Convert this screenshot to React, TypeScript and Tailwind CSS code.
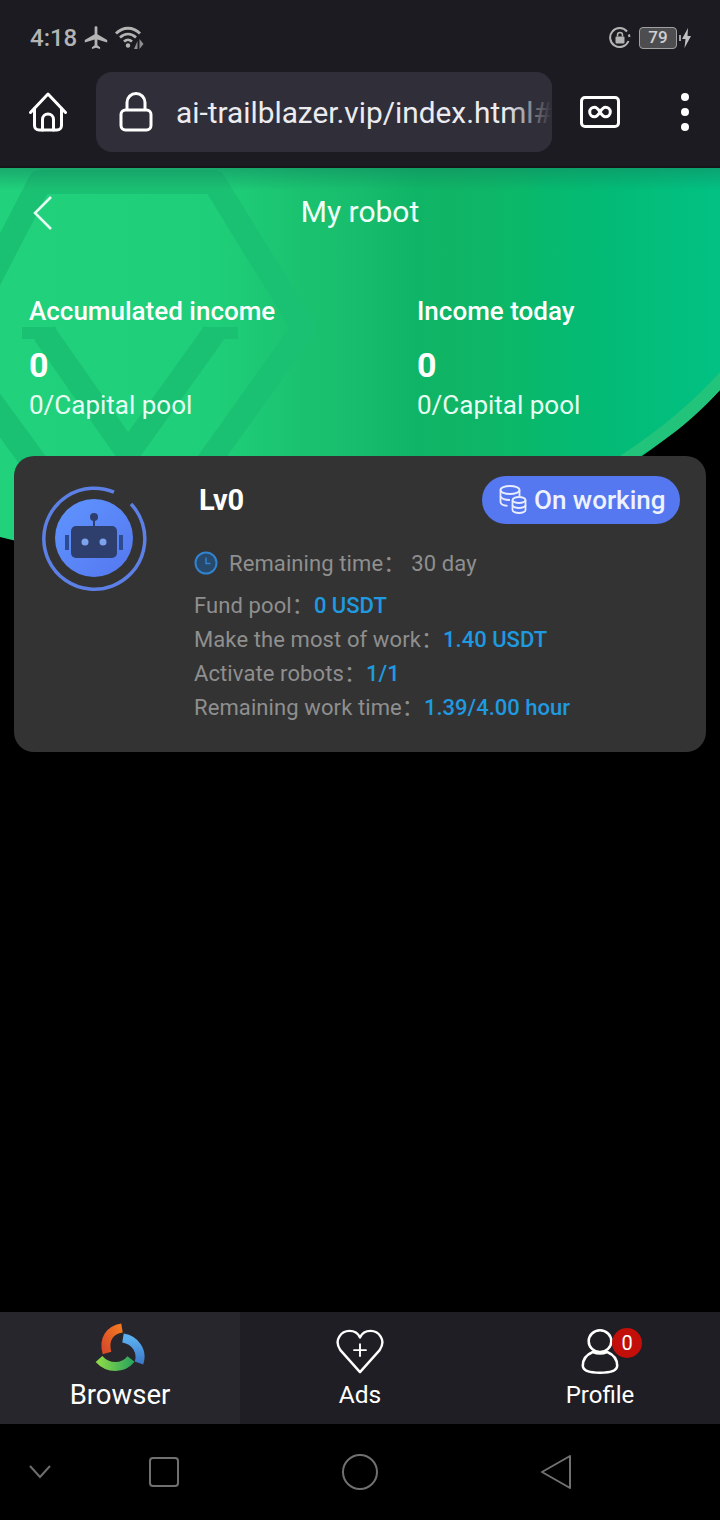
import React from "react";

const Plane = () => (
  <svg width="24" height="24" viewBox="0 0 24 24" fill="#b4b4b4">
    <path d="M10.600 1.500c0-.8.6-1.300 1.400-1.300s1.400.5 1.400 1.300v6.700l9.800 5.800v2.600l-9.800-3v5.600l2.700 2v1.900L12 21.800l-4.100 1.300v-1.900l2.700-2v-5.600l-9.800 3v-2.600l9.800-5.800z" />
  </svg>
);

const Wifi = () => (
  <svg width="30" height="24" viewBox="0 0 30 24" fill="none" stroke="#b4b4b4" strokeWidth="2.800">
    <path d="M1 7.500C8 .5 18 .5 25 7.500" />
    <path d="M5 11.500c5-4.500 11-4.500 16 0" />
    <path d="M9 15.500c3-2.500 5-2.500 8 0" />
    <circle cx="13" cy="19.500" r="2.200" fill="#b4b4b4" stroke="none" />
    <path d="M19 23l3.500-8v8zM24.500 13l4 5-4 5z" fill="#8f8f8f" stroke="none" />
  </svg>
);

const RotationLock = () => (
  <svg width="22" height="22" viewBox="0 0 22 22" fill="none">
    <path d="M19.500 14A9.500 9.500 0 1 1 18 4.500" stroke="#b4b4b4" strokeWidth="2" />
    <path d="M20.500 10a9 9 0 0 0-.8-2.500" stroke="#b4b4b4" strokeWidth="2" />
    <rect x="6.500" y="9.500" width="9" height="7" rx="1" fill="#b4b4b4" />
    <path d="M8.500 9.500V8a2.500 2.500 0 0 1 5 0v1.500" stroke="#b4b4b4" strokeWidth="1.500" />
  </svg>
);

const HomeIcon = () => (
  <svg width="38" height="40" viewBox="0 0 38 40" fill="none" stroke="white" strokeWidth="3" strokeLinejoin="round" strokeLinecap="round">
    <path d="M1.500 20.500 19 2l17.500 18.500" />
    <path d="M5.500 16.500v17a4.500 4.500 0 0 0 4.500 4.500h18a4.500 4.500 0 0 0 4.500-4.500v-17" />
    <path d="M13.500 38V27.500a5.500 5.500 0 0 1 11 0V38" />
  </svg>
);

const LockIcon = () => (
  <svg width="34" height="40" viewBox="0 0 34 40" fill="none" stroke="white" strokeWidth="3">
    <rect x="2" y="18" width="30" height="20" rx="4.500" />
    <path d="M8 18V10.500a9 9 0 0 1 18 0V18" />
  </svg>
);

const InfinityBox = () => (
  <svg width="40" height="32" viewBox="0 0 40 32" fill="none" stroke="white">
    <rect x="1.500" y="1.500" width="37" height="29" rx="3.500" strokeWidth="3" />
    <path d="M20 16c-1.800-3-3.300-4.800-5.500-4.800a4.800 4.800 0 0 0 0 9.600c2.200 0 3.700-1.800 5.500-4.800s3.300-4.800 5.500-4.800a4.800 4.800 0 0 1 0 9.600c-2.200 0-3.700-1.800-5.500-4.800z" strokeWidth="3" />
  </svg>
);

const HeroBackground = () => (
  <svg className="absolute left-0 top-0" width="720" height="380" viewBox="0 0 720 380" fill="none">
    <defs>
      <linearGradient id="heroFill" x1="0" x2="1" y1="0" y2="0">
        <stop offset="0" stopColor="#21d17b" />
        <stop offset="0.3" stopColor="#1fce78" />
        <stop offset="0.42" stopColor="#1ac26f" />
        <stop offset="0.5" stopColor="#17bd6c" />
        <stop offset="0.58" stopColor="#0fb566" />
        <stop offset="0.63" stopColor="#10b465" />
        <stop offset="0.72" stopColor="#0bb869" />
        <stop offset="0.76" stopColor="#06b96e" />
        <stop offset="0.85" stopColor="#03bb76" />
        <stop offset="1" stopColor="#02c183" />
      </linearGradient>
      <linearGradient id="heroTop" x1="0" x2="0" y1="0" y2="1">
        <stop offset="0" stopColor="#128a62" stopOpacity="0.55" />
        <stop offset="1" stopColor="#128a62" stopOpacity="0" />
      </linearGradient>
      <clipPath id="heroClip">
        <path d="M0 0H720V222C640 305 520 372 360 380L0 369Z" />
      </clipPath>
    </defs>
    <path d="M0 0H720V222C640 305 520 372 360 380C200 392 80 390 0 369Z" fill="url(#heroFill)" />
    <g clipPath="url(#heroClip)" stroke="#1bc172" fill="none">
      <path d="M-20 130 40 14H214L304 160 204 300" strokeWidth="24" strokeLinejoin="round" />
      <path d="M-20 220 60 330" strokeWidth="26" />
      <path d="M22 165H56M206 165H238" strokeWidth="12" />
      <path d="M44 165 128 285 214 165" strokeWidth="24" />
    </g>
    <path d="M620 288C660 262 695 232 720 204V222C690 255 665 272 640 288Z" fill="#21c47a" />
    <rect width="720" height="22" fill="url(#heroTop)" />
  </svg>
);

const RobotAvatar = () => (
  <svg width="106" height="106" viewBox="0 0 106 106" fill="none">
    <defs>
      <linearGradient id="disc" x1="0" x2="1" y1="0" y2="1">
        <stop offset="0" stopColor="#5f95ff" />
        <stop offset="1" stopColor="#5577f0" />
      </linearGradient>
    </defs>
    <path d="M73 7.200A50.500 50.500 0 1 0 90 19" stroke="#5c80e6" strokeWidth="3.500" />
    <circle cx="53" cy="53" r="39" fill="url(#disc)" />
    <rect x="30" y="41" width="46" height="32" rx="5" fill="#2e3f6e" />
    <path d="M53 41V32" stroke="#2e3f6e" strokeWidth="2" />
    <circle cx="53" cy="32" r="4" fill="#2e3f6e" />
    <circle cx="44" cy="57" r="3.500" fill="#7ea3ee" />
    <circle cx="62" cy="57" r="3.500" fill="#7ea3ee" />
    <rect x="24" y="50" width="4" height="15" fill="#2c4c92" />
    <rect x="78" y="50" width="4" height="15" fill="#2c4c92" />
  </svg>
);

const ClockIcon = () => (
  <svg width="24" height="24" viewBox="0 0 24 24" fill="none">
    <circle cx="12" cy="12" r="10.500" fill="#27496c" stroke="#3183d0" strokeWidth="2" />
    <path d="M12 6.500V12.500H16.500" stroke="#3183d0" strokeWidth="1.500" />
  </svg>
);

const CoinsIcon = () => (
  <svg width="28" height="30" viewBox="0 0 28 30" fill="none" stroke="#e8edff" strokeWidth="1.800">
    <ellipse cx="11" cy="5" rx="9.500" ry="4" />
    <path d="M1.500 5v12c0 2 3 3.500 7 3.800M20.500 5v6" />
    <path d="M1.500 11c0 2.200 4 4 9.500 4" />
    <ellipse cx="20" cy="15" rx="6.500" ry="3" />
    <path d="M13.500 15v10c0 1.700 3 3 6.500 3s6.500-1.300 6.500-3V15" />
    <path d="M13.500 20c0 1.700 3 3 6.500 3s6.500-1.300 6.500-3" />
  </svg>
);

const BrowserLogo = () => (
  <svg width="50" height="50" viewBox="0 0 50 50" fill="none" strokeWidth="9">
    <defs>
      <linearGradient id="lo" x1="0" x2="1" y1="1" y2="0">
        <stop offset="0" stopColor="#d84a2a" />
        <stop offset="1" stopColor="#f47a20" />
      </linearGradient>
      <linearGradient id="lb" x1="0" x2="0" y1="0" y2="1">
        <stop offset="0" stopColor="#5cb0f0" />
        <stop offset="1" stopColor="#3c78c8" />
      </linearGradient>
      <linearGradient id="lg" x1="0" x2="1" y1="0" y2="0">
        <stop offset="0" stopColor="#8ad848" />
        <stop offset="1" stopColor="#2fa85c" />
      </linearGradient>
    </defs>
    <path d="M12 31C8 17 15 8 27 6" stroke="url(#lo)" />
    <path d="M28 16C40 18 48 29 44 41" stroke="url(#lb)" />
    <path d="M4 37C13 47 28 47 36 37" stroke="url(#lg)" />
  </svg>
);

const HeartIcon = () => (
  <svg width="48" height="46" viewBox="0 0 50 48" fill="none" stroke="white">
    <path d="M25 45 4.500 22C-3 11 6 2 14 2c5 0 9 2.500 11 7 2-4.500 6-7 11-7 8 0 17 9 9.500 20z" strokeWidth="2.500" strokeLinejoin="round" />
    <path d="M25 15v14M18 22h14" strokeWidth="2" />
  </svg>
);

const ProfileIcon = () => (
  <svg width="38" height="48" viewBox="0 0 42 50" fill="none" stroke="white" strokeWidth="2.800">
    <ellipse cx="21" cy="13" rx="12.500" ry="12" />
    <path d="M13 25C6 28 2 33 2 40c0 5 5 8 19 8s19-3 19-8c0-7-4-12-11-15-5 2-11 2-16 0z" />
  </svg>
);

const InfoRow = ({ label, value }: { label: string; value: string }) => (
  <div className="flex h-[34px] items-center whitespace-nowrap text-[22px] tracking-[0.1px] text-[#8f8f8f]">
    <span>{label}：</span>
    <span className="font-medium tracking-normal text-[#1f9ae0]">{value}</span>
  </div>
);

const Stat = ({ title }: { title: string }) => (
  <div className="flex flex-col text-white">
    <div className="text-[26px] font-medium leading-[34px]">{title}</div>
    <div className="mt-[18px] text-[34px] font-bold leading-[38px]">0</div>
    <div className="mt-[2px] text-[26px] leading-[38px] text-[#e6fff2]">0/Capital pool</div>
  </div>
);

export default function App() {
  return (
    <div className="flex h-[1520px] w-[720px] flex-col overflow-hidden bg-black font-['Roboto','Noto_Sans_CJK_SC',sans-serif]">
      <header className="h-[168px] shrink-0 border-b-2 border-[#15151a] bg-[#1c1b21]">
        <div className="flex h-[72px] items-center justify-between pl-[30px] pr-[29px] pt-[4px]">
          <div className="flex items-center gap-[7px]">
            <span className="text-[24px] font-medium text-[#b4b4b4]">4:18</span>
            <Plane />
            <Wifi />
          </div>
          <div className="flex items-center">
            <RotationLock />
            <div className="ml-[8px] flex h-[22px] w-[38px] items-center justify-center rounded-[4px] border border-[#a0a0a0] bg-[#4d4d50] text-[17px] font-medium text-[#d0d0d0]">
              79
            </div>
            <span className="ml-[2px] h-[6px] w-[2px] bg-[#a0a0a0]" />
            <svg className="ml-[1px]" width="9" height="20" viewBox="0 0 9 20" fill="#c0c0c0">
              <path d="M6 0 0 11h3.500L2.500 20 9 8H5.500z" />
            </svg>
          </div>
        </div>
        <div className="flex items-center pl-[29px]">
          <HomeIcon />
          <div className="relative ml-[29px] flex h-[80px] w-[456px] items-center overflow-hidden rounded-[16px] bg-[#302f39] pl-[23px]">
            <LockIcon />
            <span className="ml-[23px] mt-[2px] whitespace-nowrap text-[29.800px] text-[#ecebf0]">ai-trailblazer.vip/index.html#</span>
            <div className="absolute bottom-0 right-0 top-0 w-[45px] bg-gradient-to-r from-transparent to-[#302f39]" />
          </div>
          <div className="ml-[28px]">
            <InfinityBox />
          </div>
          <div className="ml-[61px] flex flex-col gap-[7px]">
            <span className="size-[8px] rounded-full bg-white" />
            <span className="size-[8px] rounded-full bg-white" />
            <span className="size-[8px] rounded-full bg-white" />
          </div>
        </div>
      </header>

      <main className="relative min-h-0 flex-1 overflow-hidden">
        <HeroBackground />
        <div className="relative">
          <div className="flex h-[88px] items-center justify-center pb-[2px]">
            <svg className="absolute left-[32px] top-[27px]" width="22" height="36" viewBox="0 0 22 36" fill="none" stroke="#e8fff4" strokeWidth="2.500">
              <path d="M19 2 3 18l16 16" />
            </svg>
            <h1 className="text-[30px] font-normal text-[#f0fff8]">My robot</h1>
          </div>
          <div className="flex h-[200px] pl-[29px] pt-[38px]">
            <div className="w-[388px]">
              <Stat title="Accumulated income" />
            </div>
            <Stat title="Income today" />
          </div>

          <section className="relative mx-[14px] flex h-[296px] rounded-[20px] bg-[#333333] pl-[27px] pt-[29px]">
            <RobotAvatar />
            <div className="ml-[47px] flex-1">
              <div className="flex items-start justify-between pr-[26px]">
                <div className="pl-[5px] text-[29px] font-bold leading-[30px] text-white">Lv0</div>
                <div className="-mt-[9px] flex h-[48px] w-[198px] items-center gap-[7px] rounded-full bg-[#5578f0] pl-[17px]">
                  <CoinsIcon />
                  <span className="mt-[1px] whitespace-nowrap text-[26px] font-medium text-[#eef2ff]">On working</span>
                </div>
              </div>
              <div className="mt-[22px] flex h-[34px] items-center whitespace-nowrap text-[22px] tracking-[0.1px] text-[#8f8f8f]">
                <ClockIcon />
                <span className="ml-[11px]">Remaining time：</span>
                <span className="ml-[6px]">30 day</span>
              </div>
              <div className="mt-[8px]">
                <InfoRow label="Fund pool" value="0 USDT" />
                <InfoRow label="Make the most of work" value="1.40 USDT" />
                <InfoRow label="Activate robots" value="1/1" />
                <InfoRow label="Remaining work time" value="1.39/4.00 hour" />
              </div>
            </div>
          </section>
        </div>
      </main>

      <nav className="grid h-[112px] shrink-0 grid-cols-3 bg-[#1f1e24] text-white">
        <div className="flex flex-col items-center bg-[#27262c] pt-[10px]">
          <BrowserLogo />
          <span className="mt-[7px] text-[27.500px] leading-[32px]">Browser</span>
        </div>
        <div className="flex flex-col items-center pt-[17px]">
          <HeartIcon />
          <span className="mt-[5px] text-[24.500px] leading-[30px]">Ads</span>
        </div>
        <div className="flex flex-col items-center pt-[16px]">
          <div className="relative">
            <ProfileIcon />
            <span className="absolute left-[31px] top-0 flex size-[30px] items-center justify-center rounded-full bg-[#c20f0a] text-[20px] text-white">0</span>
          </div>
          <span className="mt-[4px] text-[24px] leading-[30px]">Profile</span>
        </div>
      </nav>

      <div className="relative flex h-[96px] shrink-0 items-center">
        <svg className="ml-[29px]" width="22" height="14" viewBox="0 0 22 14" fill="none" stroke="#6e6e6e" strokeWidth="2">
          <path d="M1 1l10 11L21 1" />
        </svg>
        <div className="ml-[98px] size-[30px] rounded-[4px] border-2 border-[#707070]" />
        <div className="ml-[163px] size-[36px] rounded-full border-2 border-[#707070]" />
        <svg className="ml-[162px]" width="32" height="36" viewBox="0 0 32 36" fill="none" stroke="#707070" strokeWidth="2" strokeLinejoin="round">
          <path d="M30 2 2 18l28 16z" />
        </svg>
      </div>
    </div>
  );
}
